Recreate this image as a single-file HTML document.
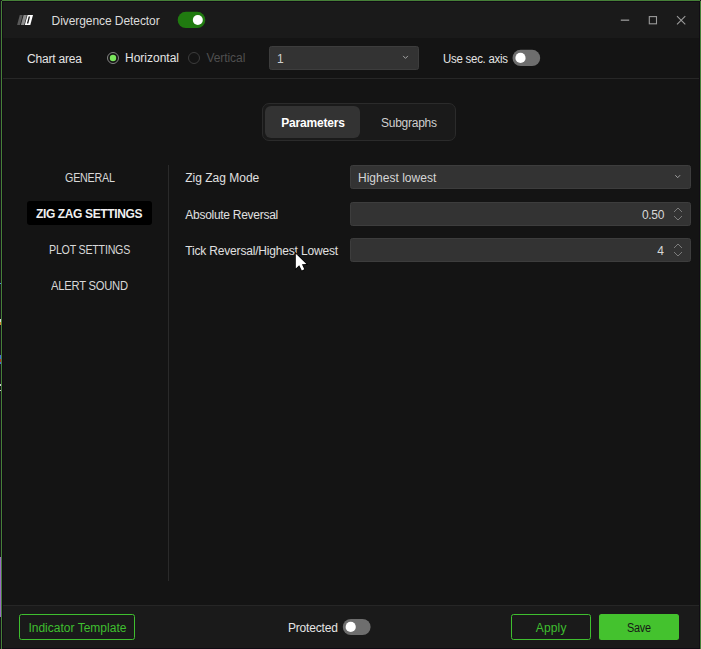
<!DOCTYPE html>
<html><head><meta charset="utf-8"><title>Divergence Detector</title>
<style>
html,body{margin:0;padding:0;background:#15131a;}
body{width:701px;height:649px;position:relative;overflow:hidden;font-family:"Liberation Sans",sans-serif;font-size:12px;line-height:14px;}
.a{position:absolute;}
.t{position:absolute;white-space:pre;display:inline-block;transform-origin:0 50%;height:14px;}
svg{position:absolute;left:0;top:0;}
</style></head>
<body>

<div class="a" style="left:0;top:0;width:1px;height:649px;background:#15131a"></div>
<div class="a" style="left:1px;top:1px;width:1px;height:648px;background:#468038"></div>
<div class="a" style="left:2px;top:0;width:698px;height:1px;background:#468038"></div>
<div class="a" style="left:700px;top:1px;width:1px;height:648px;background:#468038"></div>
<div class="a" style="left:2px;top:1px;width:698px;height:648px;background:#110c14"></div>
<div class="a" style="left:0;top:557px;width:1px;height:60px;background:#9b6cc4"></div>
<div class="a" style="left:0;top:283px;width:1px;height:1px;background:#4a8fd8"></div>
<div class="a" style="left:0;top:319px;width:1px;height:3px;background:#d8d8d8"></div>
<div class="a" style="left:0;top:322px;width:1px;height:3px;background:#d88a30"></div>
<div class="a" style="left:0;top:355px;width:1px;height:4px;background:#3f6fd0"></div>
<div class="a" style="left:0;top:359px;width:1px;height:3px;background:#b03020"></div>
<div class="a" style="left:0;top:362px;width:1px;height:2px;background:#3f6fd0"></div>
<div class="a" style="left:0;top:384px;width:1px;height:2px;background:#cfcfcf"></div>
<div class="a" style="left:0;top:390px;width:1px;height:1px;background:#cfcfcf"></div>
<!-- title bar -->
<div class="a" style="left:3px;top:2px;width:696px;height:36px;background:#1a1a1a"></div>
<!-- content -->
<div class="a" style="left:3px;top:38px;width:696px;height:567px;background:#141414"></div>
<div class="a" style="left:3px;top:78px;width:696px;height:1px;background:#272727"></div>
<!-- footer -->
<div class="a" style="left:3px;top:605px;width:696px;height:1px;background:#262626"></div>
<div class="a" style="left:3px;top:606px;width:696px;height:42px;background:#1a1a1a"></div>
<!-- title toggle -->
<!-- radios -->
<!-- dropdown 1 -->
<div class="a" style="left:269px;top:46px;width:150px;height:24px;border-radius:2.5px;box-sizing:border-box;border:1px solid #3d3d3d;background:#333"></div>
<!-- sec axis toggle -->
<!-- tabs -->
<div class="a" style="left:262px;top:103px;width:194px;height:38px;border-radius:7px;box-sizing:border-box;border:1px solid #2b2b2b;background:#1a1a1a"></div>
<div class="a" style="left:265px;top:106px;width:95px;height:32px;border-radius:6px;background:#333"></div>
<!-- nav selected -->
<div class="a" style="left:27px;top:201px;width:125px;height:24px;border-radius:3px;background:#000"></div>
<!-- divider -->
<div class="a" style="left:168px;top:165px;width:1px;height:416px;background:#2a2a2a"></div>
<!-- fields -->
<div class="a" style="left:350px;top:165px;width:341px;height:24px;border-radius:2.5px;box-sizing:border-box;border:1px solid #3d3d3d;background:#333"></div>
<div class="a" style="left:350px;top:202px;width:341px;height:24px;border-radius:2.5px;box-sizing:border-box;border:1px solid #3d3d3d;background:#333"></div>
<div class="a" style="left:350px;top:238px;width:341px;height:24px;border-radius:2.5px;box-sizing:border-box;border:1px solid #3d3d3d;background:#333"></div>
<!-- footer buttons -->
<div class="a" style="left:19px;top:614px;width:116px;height:26px;border-radius:2.5px;box-sizing:border-box;border:1px solid #3fbf2f"></div>
<div class="a" style="left:511px;top:614px;width:80px;height:26px;border-radius:2.5px;box-sizing:border-box;border:1px solid #3fbf2f"></div>
<div class="a" style="left:599px;top:614px;width:80px;height:26px;border-radius:2.5px;background:#44c22e"></div>
<!-- protected toggle -->


<svg width="701" height="649" viewBox="0 0 701 649">
<!-- toggles -->
<rect x="177.7" y="11.8" width="27.6" height="16.2" rx="8.1" fill="#207a10"/>
<circle cx="197.8" cy="19.95" r="5" fill="#fff"/>
<rect x="512.5" y="49.8" width="27.7" height="16.2" rx="8.1" fill="#6e6e6e"/>
<circle cx="520.5" cy="57.9" r="5.1" fill="#fff"/>
<rect x="342.8" y="619" width="27.8" height="16.1" rx="8.1" fill="#6e6e6e"/>
<circle cx="350.7" cy="626.9" r="5.1" fill="#fff"/>
<!-- radios -->
<circle cx="113" cy="58" r="5.5" fill="none" stroke="#858585" stroke-width="1"/>
<circle cx="113" cy="58" r="3.2" fill="#7ae65c"/>
<circle cx="194" cy="58" r="5.5" fill="none" stroke="#3c3c3c" stroke-width="1"/>
<!-- logo -->
<polygon points="17.1,25 20.0,25 22.7,15 19.8,15" fill="#595959"/>
<polygon points="20.9,25 24.2,25 26.9,15 23.6,15" fill="#8c8c8c"/>
<polygon points="24.8,25 30.3,25 33,15 27.5,15" fill="#ffffff"/>
<polygon points="26.9,23.5 28.3,23.5 30.1,16.5 28.7,16.5" fill="#1a1a1a"/>
<!-- window controls -->
<path d="M620.8 20.2H629.2" stroke="#8e8e8e" stroke-width="1.4" fill="none"/>
<g stroke="#9a9a9a" stroke-width="1.1" fill="none">
<rect x="649.3" y="16.6" width="7.2" height="7.2"/>
<path d="M677 16.1L685.3 24.4M685.3 16.1L677 24.4"/>
</g>
<!-- chevrons -->
<g stroke="#a0a0a0" stroke-width="1" fill="none">
<path d="M403.1 55.9L405.5 58.4L407.9 55.9"/>
<path d="M675.3 175.2L677.7 177.7L680.1 175.2"/>
</g>
<g stroke="#7c7c7c" stroke-width="1" fill="none">
<path d="M674 212L678 208L682 212"/>
<path d="M674 216L678 220L682 216"/>
<path d="M674 248L678 244L682 248"/>
<path d="M674 252L678 256L682 252"/>
</g>
</svg>

<span class="t" style="left:51.6px;top:13.8px;color:#dcdcdc;letter-spacing:-0.07px;">Divergence Detector</span>
<span class="t" style="left:27.0px;top:52.0px;color:#e4e4e4;letter-spacing:-0.19px;">Chart area</span>
<span class="t" style="left:125.0px;top:51.0px;color:#e4e4e4;">Horizontal</span>
<span class="t" style="left:206.5px;top:51.0px;color:#4f4f4f;letter-spacing:-0.08px;">Vertical</span>
<span class="t" style="left:277.0px;top:52.0px;color:#d0d0d0;">1</span>
<span class="t" style="left:442.9px;top:52.0px;color:#e4e4e4;letter-spacing:-0.25px;transform:scaleX(0.952);">Use sec. axis</span>
<span class="t" style="left:281.3px;top:116.0px;color:#ffffff;font-weight:700;letter-spacing:-0.19px;">Parameters</span>
<span class="t" style="left:381.0px;top:116.0px;color:#cfcfcf;letter-spacing:-0.26px;">Subgraphs</span>
<span class="t" style="left:65.0px;top:171.0px;color:#d8d8d8;letter-spacing:-0.25px;transform:scaleX(0.895);">GENERAL</span>
<span class="t" style="left:36.0px;top:207.0px;color:#f0f0f0;font-weight:700;letter-spacing:-0.37px;">ZIG ZAG SETTINGS</span>
<span class="t" style="left:49.0px;top:243.0px;color:#d8d8d8;letter-spacing:-0.25px;transform:scaleX(0.889);">PLOT SETTINGS</span>
<span class="t" style="left:51.0px;top:279.0px;color:#d8d8d8;letter-spacing:-0.25px;transform:scaleX(0.934);">ALERT SOUND</span>
<span class="t" style="left:185.3px;top:171.0px;color:#e0e0e0;letter-spacing:-0.01px;">Zig Zag Mode</span>
<span class="t" style="left:185.3px;top:208.0px;color:#e0e0e0;letter-spacing:-0.28px;">Absolute Reversal</span>
<span class="t" style="left:185.3px;top:244.0px;color:#e0e0e0;letter-spacing:-0.18px;">Tick Reversal/Highest Lowest</span>
<span class="t" style="left:358.0px;top:171.0px;color:#d6d6d6;letter-spacing:0.02px;">Highest lowest</span>
<span class="t" style="left:642.0px;top:208.0px;color:#d8d8d8;letter-spacing:-0.35px;">0.50</span>
<span class="t" style="left:657.3px;top:244.0px;color:#d8d8d8;">4</span>
<span class="t" style="left:28.4px;top:620.6px;color:#3fbf2f;letter-spacing:0.01px;">Indicator Template</span>
<span class="t" style="left:287.9px;top:620.6px;color:#e4e4e4;letter-spacing:-0.16px;">Protected</span>
<span class="t" style="left:535.7px;top:620.6px;color:#3fbf2f;letter-spacing:0.19px;">Apply</span>
<span class="t" style="left:627.0px;top:620.6px;color:#161616;letter-spacing:-0.25px;transform:scaleX(0.902);">Save</span>
<svg width="701" height="649" viewBox="0 0 701 649" style="pointer-events:none">
<!-- cursor -->
<path d="M295.8 253.7L295.8 268.4L299.2 265.3L301.8 270.4L304.3 269.3L301.9 264.3L306.4 264Z" fill="#fff" stroke="#000" stroke-width="1.6" stroke-linejoin="miter" paint-order="stroke"/>
</svg>
</body></html>
